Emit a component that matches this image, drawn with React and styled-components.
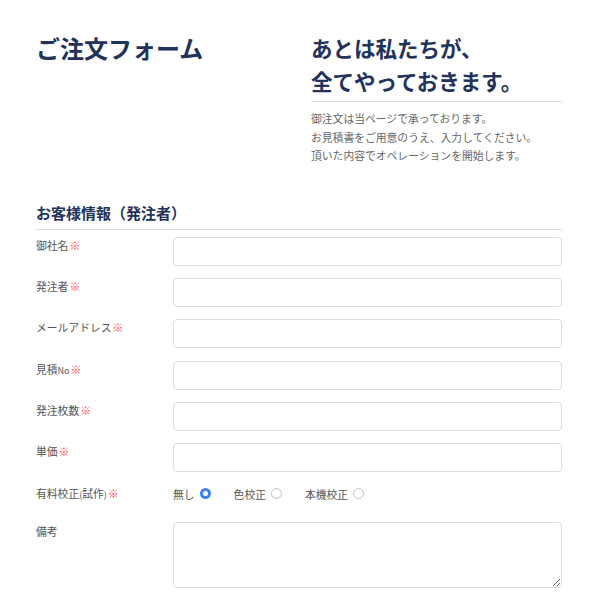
import React, { useState } from "react";
import styled, { createGlobalStyle } from "styled-components";

const GlobalStyle = createGlobalStyle`
  body {
    margin: 0;
    background: #fff;
    font-family: "Noto Sans CJK JP", "Noto Sans", sans-serif;
  }
`;

const Page = styled.div`
  width: 526px;
  padding: 31px 38px 20px 36px;
`;

const Header = styled.header`
  display: grid;
  grid-template-columns: 275px 1fr;
  align-items: start;
`;

const Title = styled.h1`
  margin: 0;
  font-size: 24px;
  line-height: 34px;
  font-weight: 700;
  color: #22325a;
`;

const Lead = styled.h2`
  margin: 0;
  padding-bottom: 4px;
  border-bottom: 1px solid #dcdcdc;
  font-size: 21.5px;
  line-height: 33px;
  font-weight: 700;
  color: #22325a;
`;

const Intro = styled.p`
  margin: 7px 0 0;
  font-size: 10.8px;
  line-height: 18.5px;
  color: #666;
`;

const SectionTitle = styled.h3`
  margin: 36px 0 0;
  padding-bottom: 4px;
  border-bottom: 1px solid #dcdcdc;
  font-size: 15px;
  line-height: 24px;
  font-weight: 700;
  color: #22325a;
`;

const Form = styled.form`
  display: flex;
  flex-direction: column;
  gap: 12.4px;
  padding-top: 7px;
`;

const Row = styled.div`
  display: grid;
  grid-template-columns: 137px 1fr;
  align-items: ${(p) => (p.$center ? "center" : "start")};
  padding-bottom: ${(p) => (p.$extra ? "7px" : "0")};
`;

const Label = styled.label`
  font-size: 10.8px;
  line-height: 16px;
  padding-top: ${(p) => (p.$offset ? "1px" : "0")};
  color: #555;
`;

const Required = styled.span`
  color: #f44;
  margin-left: 1px;
`;

const Small = styled.span`
  font-size: 9px;
`;

const TextInput = styled.input`
  box-sizing: border-box;
  width: 100%;
  height: 29px;
  border: 1px solid #dcdcdc;
  border-radius: 4px;
  padding: 0 8px;
  font: inherit;
  font-size: 12px;
  outline: none;
`;

const TextArea = styled.textarea`
  box-sizing: border-box;
  display: block;
  width: 100%;
  height: 66px;
  border: 1px solid #dcdcdc;
  border-radius: 4px;
  padding: 6px 8px;
  font: inherit;
  font-size: 12px;
  resize: vertical;
  outline: none;
`;

const RadioGroup = styled.div`
  display: flex;
  align-items: center;
  gap: 23px;
  height: 16px;
`;

const RadioOption = styled.label`
  display: flex;
  align-items: center;
  gap: 5px;
  font-size: 10.8px;
  color: #555;
  cursor: pointer;
`;

const Radio = styled.input.attrs({ type: "radio" })`
  appearance: none;
  margin: 0;
  width: 11px;
  height: 11px;
  border-radius: 50%;
  border: 1px solid #c4c4c4;
  background: #fff;
  box-sizing: border-box;
  cursor: pointer;

  &:checked {
    border: 3.5px solid #3c82f0;
    background: #fff;
  }
`;

const fields = [
  { name: "company", label: "御社名" },
  { name: "orderer", label: "発注者" },
  { name: "email", label: "メールアドレス" },
  { name: "quote", label: "見積", suffix: "No" },
  { name: "count", label: "発注枚数" },
  { name: "price", label: "単価" },
];

const proofs = ["無し", "色校正", "本機校正"];

export default function App() {
  const [proof, setProof] = useState("無し");

  return (
    <>
      <GlobalStyle />
      <Page>
        <Header>
          <Title>ご注文フォーム</Title>
          <div>
            <Lead>
              あとは私たちが、
              <br />
              全てやっておきます。
            </Lead>
            <Intro>
              御注文は当ページで承っております。
              <br />
              お見積書をご用意のうえ、入力してください。
              <br />
              頂いた内容でオペレーションを開始します。
            </Intro>
          </div>
        </Header>

        <SectionTitle>お客様情報（発注者）</SectionTitle>
        <Form onSubmit={(e) => e.preventDefault()}>
          {fields.map((f) => (
            <Row key={f.name}>
              <Label htmlFor={f.name}>
                {f.label}
                {f.suffix && <Small>{f.suffix}</Small>}
                <Required>※</Required>
              </Label>
              <TextInput id={f.name} name={f.name} />
            </Row>
          ))}

          <Row $center $extra>
            <Label>
              有料校正<Small>(</Small>試作<Small>)</Small>
              <Required>※</Required>
            </Label>
            <RadioGroup>
              {proofs.map((p) => (
                <RadioOption key={p}>
                  {p}
                  <Radio
                    name="proof"
                    checked={proof === p}
                    onChange={() => setProof(p)}
                  />
                </RadioOption>
              ))}
            </RadioGroup>
          </Row>

          <Row>
            <Label htmlFor="note" $offset>
              備考
            </Label>
            <TextArea id="note" name="note" />
          </Row>
        </Form>
      </Page>
    </>
  );
}
